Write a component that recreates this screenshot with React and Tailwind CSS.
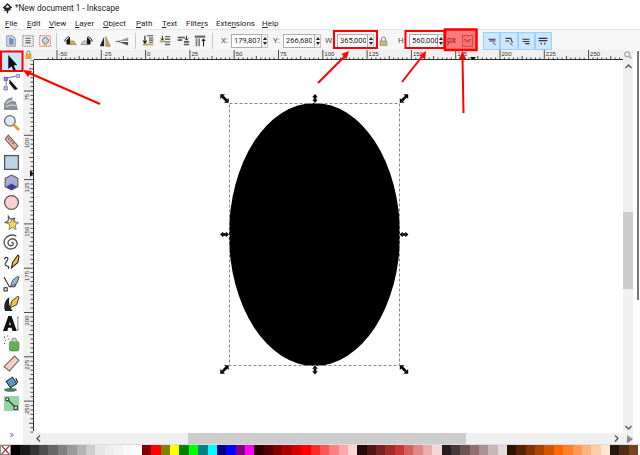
const FONT = { fontFamily: 'Roboto, "Liberation Sans", sans-serif' }

const SWATCHES = [
  '#000000', '#1a1a1a', '#333333', '#4d4d4d', '#666666', '#808080', '#999999', '#b3b3b3', '#cccccc', '#e6e6e6', '#ececec', '#f2f2f2', '#f9f9f9', '#ffffff',
  '#800000', '#ff0000', '#808000', '#ffff00', '#008000', '#00ff00', '#008080', '#00ffff', '#000080', '#0000ff', '#800080', '#ff00ff',
  '#2b0000', '#550000', '#800000', '#aa0000', '#d40000', '#ff0000', '#ff2a2a', '#ff5555', '#ff8080', '#ffaaaa', '#ffd5d5',
  '#280b0b', '#501616', '#782121', '#a02c2c', '#c83737', '#d35f5f', '#de8787', '#e9afaf', '#f4d7d7',
  '#241c1c', '#483737', '#6c5353', '#916f6f', '#ac9393', '#c8b7b7', '#e3dbdb',
  '#2b1100', '#552200', '#803300', '#aa4400', '#d45500', '#ff6600', '#ff7f2a', '#ff9955', '#ffb380', '#ffccaa', '#ffe6d5',
  '#28170b', '#502d16', '#784421',
]

const MENU = [
  ['', 'F', 'ile', 'w-[22px]'], ['', 'E', 'dit', 'w-[22px]'], ['', 'V', 'iew', 'w-[26px]'], ['', 'L', 'ayer', 'w-[28px]'], ['', 'O', 'bject', 'w-[33px]'],
  ['', 'P', 'ath', 'w-[26px]'], ['', 'T', 'ext', 'w-[24px]'], ['Filte', 'r', 's', 'w-[30px]'], ['Exte', 'n', 'sions', 'w-[46px]'], ['', 'H', 'elp', 'w-[24px]'],
]

function Ico({ size = 16, children }) {
  return <svg width={size} height={size} viewBox="0 0 16 16">{children}</svg>
}

const TOP_ICONS = [
  <><path d="M3 2h7l3 3v9H3z" fill="#c9d6e6" stroke="#8a97a8" /><path d="M6 4v8h5V6z" fill="#6d8fc0" /></>,
  <><rect x="2" y="2" width="12" height="12" fill="#eee" stroke="#666" strokeDasharray="1.5 1" /><path d="M5 5h6M5 7.500h6M5 10h6" stroke="#777" strokeWidth="1.500" /></>,
  <><rect x="2" y="2" width="12" height="12" fill="#f6f6f6" stroke="#d33" strokeDasharray="1.5 1" /><circle cx="8.500" cy="7.500" r="3.500" fill="#c8d5e5" stroke="#667" /><path d="M5 13l4-3 2 3z" fill="#e5b93c" /></>,
  <><path d="M4 12V7l4-4v9z" fill="#111" /><path d="M8 12h7l-3-4H8z" fill="#e2b93a" stroke="#555" strokeWidth=".6" /><path d="M2 9c0-3 2-5 5-6" stroke="#111" fill="none" /></>,
  <><path d="M12 12V7L8 3v9z" fill="#111" /><path d="M8 12H1l3-4h4z" fill="#c9cfd8" stroke="#555" strokeWidth=".6" /><path d="M14 9c0-3-2-5-5-6" stroke="#111" fill="none" /></>,
  <><path d="M7 3v11H2z" fill="#222" /><path d="M9 3v11h5z" fill="#d9a93a" stroke="#666" strokeWidth=".6" /></>,
  <><path d="M15 4v4H4z" fill="#999" /><path d="M15 13V9H4z" fill="#555" /><path d="M1 8.500h5" stroke="#444" /></>,
  <><path d="M7 2h7M9 4.500h5M9 7h5M9 9.500h5" stroke="#444" strokeWidth="1.200" /><path d="M2 12h12" stroke="#c9a22f" strokeWidth="2" /><path d="M4.500 2v7M2.500 7.500l2 3 2-3" stroke="#111" strokeWidth="1.200" fill="none" /></>,
  <><path d="M8 3h6M8 6h6M8 9h6M8 12h6" stroke="#666" strokeWidth="1.500" /><path d="M2 8.500h6" stroke="#c9a22f" strokeWidth="2" /><path d="M5 2v5M3 5l2 2 2-2" stroke="#111" fill="none" /></>,
  <><path d="M2 4h8M2 7h5M9 9h6M9 12h6" stroke="#555" strokeWidth="1.800" /><path d="M12 2v5M10 5l2 2 2-2" stroke="#111" fill="none" /></>,
  <><path d="M2 3h12" stroke="#666" strokeWidth="2.500" /><path d="M4 5v9M7 5v9" stroke="#777" strokeWidth="1.800" /><path d="M12 14V6M10 8l2-2 2 2" stroke="#111" strokeWidth="1.200" fill="none" /></>,
]

const TOOL_ICONS = [
  <path d="M5 1v13l3-2.500 2 4.500 2-1-2-4.500h3.500z" fill="#111" />,
  <><path d="M3 11V4l9-2" stroke="#77a" fill="none" /><rect x="1" y="3" width="3" height="3" fill="#88d" stroke="#44a" strokeWidth=".6" /><rect x="1" y="12" width="3" height="3" fill="#ccd" stroke="#44a" strokeWidth=".6" /><rect x="13" y="0" width="3" height="3" fill="#ccd" stroke="#44a" strokeWidth=".6" /><path d="M6 5l8 9-3 1-5-6z" fill="#111" /></>,
  <><path d="M1 15V9c2-4 5-6 8-6-1 2 0 4 3 4l2 8z" fill="#8b9298" /><path d="M3 9c2-2 4-3 6-3M3 12c3-2 6-2 9-1" stroke="#dde" fill="none" /></>,
  <><circle cx="6.500" cy="6.500" r="5" fill="#dbe7f3" stroke="#667" strokeWidth="1.200" /><path d="M10 10l5 5" stroke="#e09a20" strokeWidth="2.500" /></>,
  <><path d="M5 1l9 10-3 4L2 5z" fill="#eab0a0" stroke="#666" /><path d="M5 5l1-1M7 7l1-1M9 9l1-1" stroke="#444" /></>,
  <rect x="1.500" y="1.500" width="13" height="13" fill="#bcd3e8" stroke="#555" strokeWidth="1.200" />,
  <><path d="M8 1l6 3v8l-6 3-6-3V4z" fill="#a8abd8" stroke="#555" /><path d="M3 12l5-3 5 3-5 3z" fill="#3c3f8c" /></>,
  <circle cx="8" cy="8" r="6.500" fill="#fbd0d5" stroke="#555" strokeWidth="1.200" />,
  <><path d="M5 2l2 3 4-1-1 3 3 2-4 0-1 3-2-3-4-1 3-2z" fill="none" stroke="#555" /><path d="M9 4l1.500 3.500L14.500 8l-3 2.500.8 4-3.300-2-3.300 2 .8-4-3-2.500 4-.5z" fill="#f1dc50" stroke="#666" strokeWidth=".7" /></>,
  <path d="M8 8.500c1-1 2 0 1.500 1.500S6 11.500 5 9.500 6 4.500 9 4.500s5 3 4 6-5.500 4.500-8.500 3S0 8 2 4.500 9 0 12.500 2" fill="none" stroke="#555" strokeWidth="1.300" />,
  <><path d="M1 5c2-3 5-2 3 1S1 10 3 11s3 0 2 3" fill="none" stroke="#333" /><path d="M8 13l1-5 5-7 1 1-1 6z" fill="#eec73a" stroke="#222" /></>,
  <><path d="M1 2l5 9h5L15 2" fill="none" stroke="#333" /><path d="M7 11l2-6 5-4 1 1-2 6z" fill="#8fbbd8" stroke="#333" strokeWidth=".7" /><rect x="1" y="12" width="3" height="3" fill="#fff" stroke="#333" /></>,
  <><path d="M2 15c-2-5 0-11 4-13-1 5 0 9 3 13z" fill="#222" /><path d="M7 12l1-6 6-5 1 1-2 7z" fill="#eec73a" stroke="#222" strokeWidth=".8" /></>,
  <><path d="M0 15L5 1h3l5 14H9l-1-3H5l-1 3zM5.800 9.500h1.500L6.500 6z" fill="#111" fillRule="evenodd" /><path d="M13 2h2M14 2v12M13 14h2" stroke="#666" strokeWidth=".7" /></>,
  <><rect x="6" y="6" width="9" height="9" rx="1.500" fill="#5eb54d" stroke="#666" strokeWidth=".6" /><path d="M8 6l1-3h3l1 3" fill="#ccc" stroke="#666" strokeWidth=".6" /><path d="M1 2h1M4 1h1M2 5h1M5 4h1M1 8h1" stroke="#444" /></>,
  <path d="M11 1l4 4L6 15l-5-4z" fill="#f8cfc0" stroke="#666" />,
  <><ellipse cx="7" cy="14" rx="6" ry="1.800" fill="#4d7a5b" /><path d="M3 6l6-4 4 6-6 4z" fill="#5f97b8" stroke="#234" /><path d="M12 3l2 4" stroke="#222" strokeWidth="1.200" /></>,
  <><rect x="1" y="1" width="14" height="14" fill="#8fd6a0" /><path d="M4 4l8 8" stroke="#333" /><circle cx="4" cy="4" r="1.500" fill="#fff" stroke="#333" /><rect x="10.500" y="10.500" width="3" height="3" fill="#fff" stroke="#333" /></>,
]

const SNAP_ICONS = [
  <><path d="M4 6h8M5 8h7" stroke="#333" strokeWidth="1.300" /><path d="M9 10l3 2" stroke="#333" /></>,
  <><path d="M4 5h6l2 5M4 8h4" stroke="#333" strokeWidth="1.200" fill="none" /><path d="M9 10l3 3" stroke="#333" /></>,
  <><path d="M4 6h8M4 8.500h8M7 11h5" stroke="#333" strokeWidth="1.200" /></>,
  <><path d="M3 5h10M3 7.500h10" stroke="#333" strokeWidth="1.400" /><path d="M6 10v2M10 10v2" stroke="#333" strokeWidth="1.400" /></>,
]

function Spin({ value, w }) {
  return (
    <div className="flex h-[14px] items-center">
      <div className={`${w} h-[14px] bg-white border border-[#abadb3] pl-[2px] text-[7.5px] leading-[12px] text-[#222]`}>
        <div className="w-[25.500px] overflow-hidden whitespace-nowrap">{value}</div>
      </div>
      <div className="w-[6px] h-[14px] flex flex-col items-center justify-center gap-[2px] border border-l-0 border-[#c4c4c4] bg-[#f2f2f2]">
        <div className="w-0 h-0 border-x-[2.5px] border-x-transparent border-b-[3px] border-b-[#222]" />
        <div className="w-0 h-0 border-x-[2.5px] border-x-transparent border-t-[3px] border-t-[#222]" />
      </div>
    </div>
  )
}

function Sep({ ml }) {
  return <div className={`${ml} w-px h-[16px] bg-[#c8c8c8]`} />
}

function HRuler() {
  const labels = ['-50', '-25', '0', '25', '50', '75', '100', '125', '150', '175', '200', '225', '250']
  const ticks = []
  for (let i = -2; i < 134; i++) {
    const x = 57 + i * 4.43
    const major = i % 10 === 0
    const mid = i % 5 === 0
    ticks.push(<line key={i} x1={x} x2={x} y1={major ? 50 : mid ? 56 : 57.500} y2="60" stroke="#222" strokeWidth=".8" />)
  }
  return (
    <svg className="block" width="589" height="10" viewBox="34 50 589 10">
      <line x1="34" x2="623" y1="59.500" y2="59.500" stroke="#333" />
      {ticks}
      {labels.map((l, i) => (
        <text key={l} x={58.500 + i * 44.3} y="55.500" fontSize="6" fill="#333" fontFamily="Liberation Sans">{l}</text>
      ))}
      <path d="M470 57h6l-3 3.500z" fill="#111" />
    </svg>
  )
}

function VRuler() {
  const rows = [[91.800, '75'], [136, '100'], [180.400, '125'], [224.700, '150'], [269, '175'], [313.400, '200'], [357.700, '225'], [402, '250']]
  const ticks = []
  for (let i = 0; i < 86; i++) {
    const y = 60 + i * 4.43
    const off = Math.round((y - 47.500) / 4.43)
    const major = off % 10 === 0
    const mid = off % 5 === 0
    ticks.push(<line key={i} x1={major ? 24 : mid ? 29 : 30.500} x2="33" y1={y} y2={y} stroke="#222" strokeWidth=".8" />)
  }
  return (
    <svg className="block" width="11" height="373" viewBox="23 60 11 373">
      <line x1="33.500" x2="33.500" y1="60" y2="431" stroke="#333" />
      {ticks}
      {rows.map(([y, l]) => (
        <text key={l} transform={`translate(28.500 ${y + 2}) rotate(-90)`} textAnchor="end" fontSize="6" fill="#333" fontFamily="Liberation Sans">{l}</text>
      ))}
      <path d="M30 170v7l3.500-3.500z" fill="#111" />
    </svg>
  )
}

function Diag({ x, y, r = 0 }) {
  return (
    <g transform={`translate(${x} ${y}) rotate(${r})`} fill="#000">
      <path d="M-4.200-4.200h4.700l-4.700 4.700zM4.200 4.200h-4.700l4.700-4.700z" />
      <path d="M-2-2 2 2" stroke="#000" strokeWidth="2.600" />
    </g>
  )
}

function Vert({ x, y, r = 0 }) {
  return (
    <g transform={`translate(${x} ${y}) rotate(${r})`} fill="#000">
      <path d="M0-4.500 2.800-1.300H-2.800zM0 4.500 2.800 1.300H-2.800z" />
      <rect x="-1.300" y="-1.500" width="2.600" height="3" />
    </g>
  )
}

function Canvas() {
  return (
    <svg className="block" width="589" height="373" viewBox="34 60 589 373">
      <ellipse cx="314.500" cy="234.500" rx="85.500" ry="131.500" fill="#000" />
      <rect x="229.500" y="103.500" width="170" height="262" fill="none" stroke="#888" strokeDasharray="3 2" />
      <Diag x={224.500} y={98.500} />
      <Diag x={404} y={98.500} r={90} />
      <Diag x={224.500} y={369.500} r={90} />
      <Diag x={404} y={369.500} />
      <Vert x={315} y={98.500} />
      <Vert x={315} y={370} />
      <Vert x={224.500} y={234.500} r={90} />
      <Vert x={404} y={234.500} r={90} />
    </svg>
  )
}

function Annotations() {
  return (
    <svg className="absolute inset-0 pointer-events-none" width="640" height="455" viewBox="0 0 640 455">
      <g fill="none" stroke="#f00" strokeWidth="2">
        <rect x="1" y="51.500" width="21.500" height="19.500" />
        <rect x="334" y="31" width="43" height="17" />
        <rect x="405.500" y="31" width="39" height="17" />
        <path d="M100 104 27 72" />
        <path d="M318 83 346 55" />
        <path d="M402 82 424 54" />
        <path d="M463.500 113 462.500 58" />
      </g>
      <rect x="445" y="29.500" width="31.500" height="20.500" fill="#f00" fillOpacity=".5" stroke="#f00" strokeWidth="2.500" />
      <g fill="#f00">
        <path d="M23 70l9 1-4 6z" />
        <path d="M349 51l-2.500 8-5-5z" />
        <path d="M426 51l-1 8.500-5.500-4z" />
        <path d="M462.500 51l3.500 8h-7z" />
      </g>
    </svg>
  )
}

export default function App() {
  return (
    <div className="relative w-[640px] h-[455px] overflow-hidden bg-white flex flex-col text-[#222]" style={FONT}>
      {/* title */}
      <div className="h-[16px] flex items-center pl-[2px] shrink-0">
        <svg width="11" height="11" viewBox="0 0 16 16">
          <path d="M8 0l7 7-3 1 1 3-3-1-2 6-2-5-3 1 1-3-3-2z" fill="#222" />
          <path d="M8 3l3 3-3 1-3-1z" fill="#fff" />
        </svg>
        <span className="ml-[2px] text-[8.2px] leading-none whitespace-nowrap">*New document 1 - Inkscape</span>
      </div>

      {/* menu */}
      <div className="h-[13px] mt-[1px] flex items-center pl-[5px] text-[8px] leading-none shrink-0">
        {MENU.map(([pre, u, rest, w]) => (
          <span key={u + rest} className={`${w} whitespace-nowrap`}>
            {pre}<span className="underline">{u}</span>{rest}
          </span>
        ))}
      </div>

      {/* toolbar */}
      <div className="h-[21px] mt-[-1px] pt-px border-t border-[#e4e4e4] bg-[#f6f6f6] flex items-center text-[8px] shrink-0">
        <div className="ml-[2px] flex">
          {TOP_ICONS.slice(0, 3).map((ic, i) => <div key={i} className="w-[17px] flex justify-center"><Ico size={14}>{ic}</Ico></div>)}
        </div>
        <Sep ml="ml-[3px]" />
        <div className="ml-[4px] flex">
          {TOP_ICONS.slice(3, 7).map((ic, i) => <div key={i} className="w-[17.500px] flex justify-center"><Ico size={14}>{ic}</Ico></div>)}
        </div>
        <Sep ml="ml-[4px]" />
        <div className="ml-[3px] flex">
          {TOP_ICONS.slice(7).map((ic, i) => <div key={i} className="w-[17.500px] flex justify-center"><Ico size={14}>{ic}</Ico></div>)}
        </div>
        <Sep ml="ml-[3px]" />
        <span className="ml-[8px] w-[10px] text-[#555]">X:</span>
        <Spin value="179,807" w="w-[31px]" />
        <span className="ml-[5px] w-[10px] text-[#555]">Y:</span>
        <Spin value="266,680" w="w-[32px]" />
        <span className="ml-[4px] w-[12px] text-[#555]">W:</span>
        <Spin value="365,000" w="w-[31px]" />
        <svg className="ml-[5px]" width="9" height="10" viewBox="0 0 9 10">
          <path d="M2.500 5V3a2 2 0 014 0v2" fill="none" stroke="#888" />
          <rect x="1" y="5" width="7" height="5" fill="#c9b67a" stroke="#888" strokeWidth=".6" />
        </svg>
        <span className="ml-[10px] w-[11px] text-[#555]">H:</span>
        <Spin value="560,000" w="w-[29px]" />
        <div className="ml-[2px] w-[29px] h-[17px] flex items-center justify-between pl-[1px] pr-[2px] text-[#333]">
          <span className="text-[8.5px]">px</span>
          <div className="w-[11px] h-[12px] flex items-center justify-center bg-[#e6e6e6] border border-[#999]">
            <svg width="7" height="5" viewBox="0 0 7 5"><path d="M.5 1 3.500 4 6.500 1" fill="none" stroke="#622" /></svg>
          </div>
        </div>
        <div className="ml-[8px] flex">
          {SNAP_ICONS.map((ic, i) => (
            <div key={i} className="w-[17.250px] h-[18px] flex items-center justify-center bg-[#cce8ff] border border-[#99d1ff]">
              <Ico size={14}>{ic}</Ico>
            </div>
          ))}
        </div>
      </div>

      {/* body */}
      <div className="flex-1 min-h-0 flex">
        <div className="w-[23px] shrink-0 flex flex-col items-center pt-[2px]">
          {TOOL_ICONS.map((ic, i) => (
            <div key={i} className={`w-[21px] h-[20.100px] shrink-0 flex items-center justify-center ${i === 0 ? 'bg-[#cce8ff]' : ''}`}>
              <Ico size={17}>{ic}</Ico>
            </div>
          ))}
          <div className="mt-auto mb-[3px] text-[10px] leading-[12px] text-[#7878c0]">»</div>
        </div>

        <div className="flex-1 min-w-0 flex flex-col">
          <div className="flex h-[10px] shrink-0 bg-[#f0f0f0]">
            <div className="w-[11px] flex justify-center">
              <svg width="7" height="9" viewBox="0 0 7 9"><path d="M2 4V2.500a1.500 1.500 0 013 0V4" fill="none" stroke="#777" /><rect x=".5" y="4" width="6" height="5" fill="#d9a93a" /></svg>
            </div>
            <HRuler />
            <div className="w-[10px] flex justify-center items-center">
              <svg width="8" height="8" viewBox="0 0 16 16"><circle cx="6.500" cy="6.500" r="5" fill="none" stroke="#aaa" strokeWidth="2.500" /><path d="M10 10l5 5" stroke="#aaa" strokeWidth="3" /></svg>
            </div>
          </div>
          <div className="flex h-[373px] shrink-0">
            <div className="bg-[#f0f0f0]"><VRuler /></div>
            <Canvas />
            <div className="w-[10px] bg-[#f0f0f0] flex flex-col items-center">
              <svg className="mt-[4px]" width="7" height="5" viewBox="0 0 7 5"><path d="M.5 4 3.500 1 6.500 4" fill="none" stroke="#555" strokeWidth="1.300" /></svg>
              <div className="mt-[143px] w-full h-[77px] bg-[#cdcdcd]" />
              <svg className="mt-[136px]" width="7" height="5" viewBox="0 0 7 5"><path d="M.5 1 3.500 4 6.500 1" fill="none" stroke="#555" strokeWidth="1.300" /></svg>
            </div>
          </div>
          <div className="h-[11px] shrink-0 bg-[#f0f0f0] flex items-center">
            <svg className="ml-[13px]" width="5" height="7" viewBox="0 0 5 7"><path d="M4 .5 1 3.500 4 6.500" fill="none" stroke="#555" strokeWidth="1.300" /></svg>
            <div className="ml-[147px] w-[278px] h-full bg-[#cdcdcd]" />
            <svg className="ml-[148px]" width="5" height="7" viewBox="0 0 5 7"><path d="M1 .5 4 3.500 1 6.500" fill="none" stroke="#555" strokeWidth="1.300" /></svg>
            <svg className="ml-[7px]" width="7" height="8" viewBox="0 0 7 8"><path d="M1 0v8l6-4z" fill="#7aa57a" /><path d="M1 4v4l6-4z" fill="#a070b0" /></svg>
          </div>
        </div>

        <div className="w-[7px] shrink-0 pl-[4px] pt-px">
          <div className="w-[1.500px] h-[249px] bg-[#777]" />
        </div>
      </div>

      {/* palette */}
      <div className="h-[11px] border-t border-[#dcdcdc] flex shrink-0">
        <div className="w-[11px] shrink-0 bg-white">
          <svg width="11" height="10" viewBox="0 0 11 10"><path d="M1 0l9 10M10 0 1 10" stroke="#a33" strokeWidth="1.200" /><rect x=".5" y=".5" width="10" height="9" fill="none" stroke="#888" /></svg>
        </div>
        {SWATCHES.map((c, i) => (
          <div key={i} className="w-[9.360px] shrink-0" style={{ background: c }} />
        ))}
      </div>

      <Annotations />
    </div>
  )
}
